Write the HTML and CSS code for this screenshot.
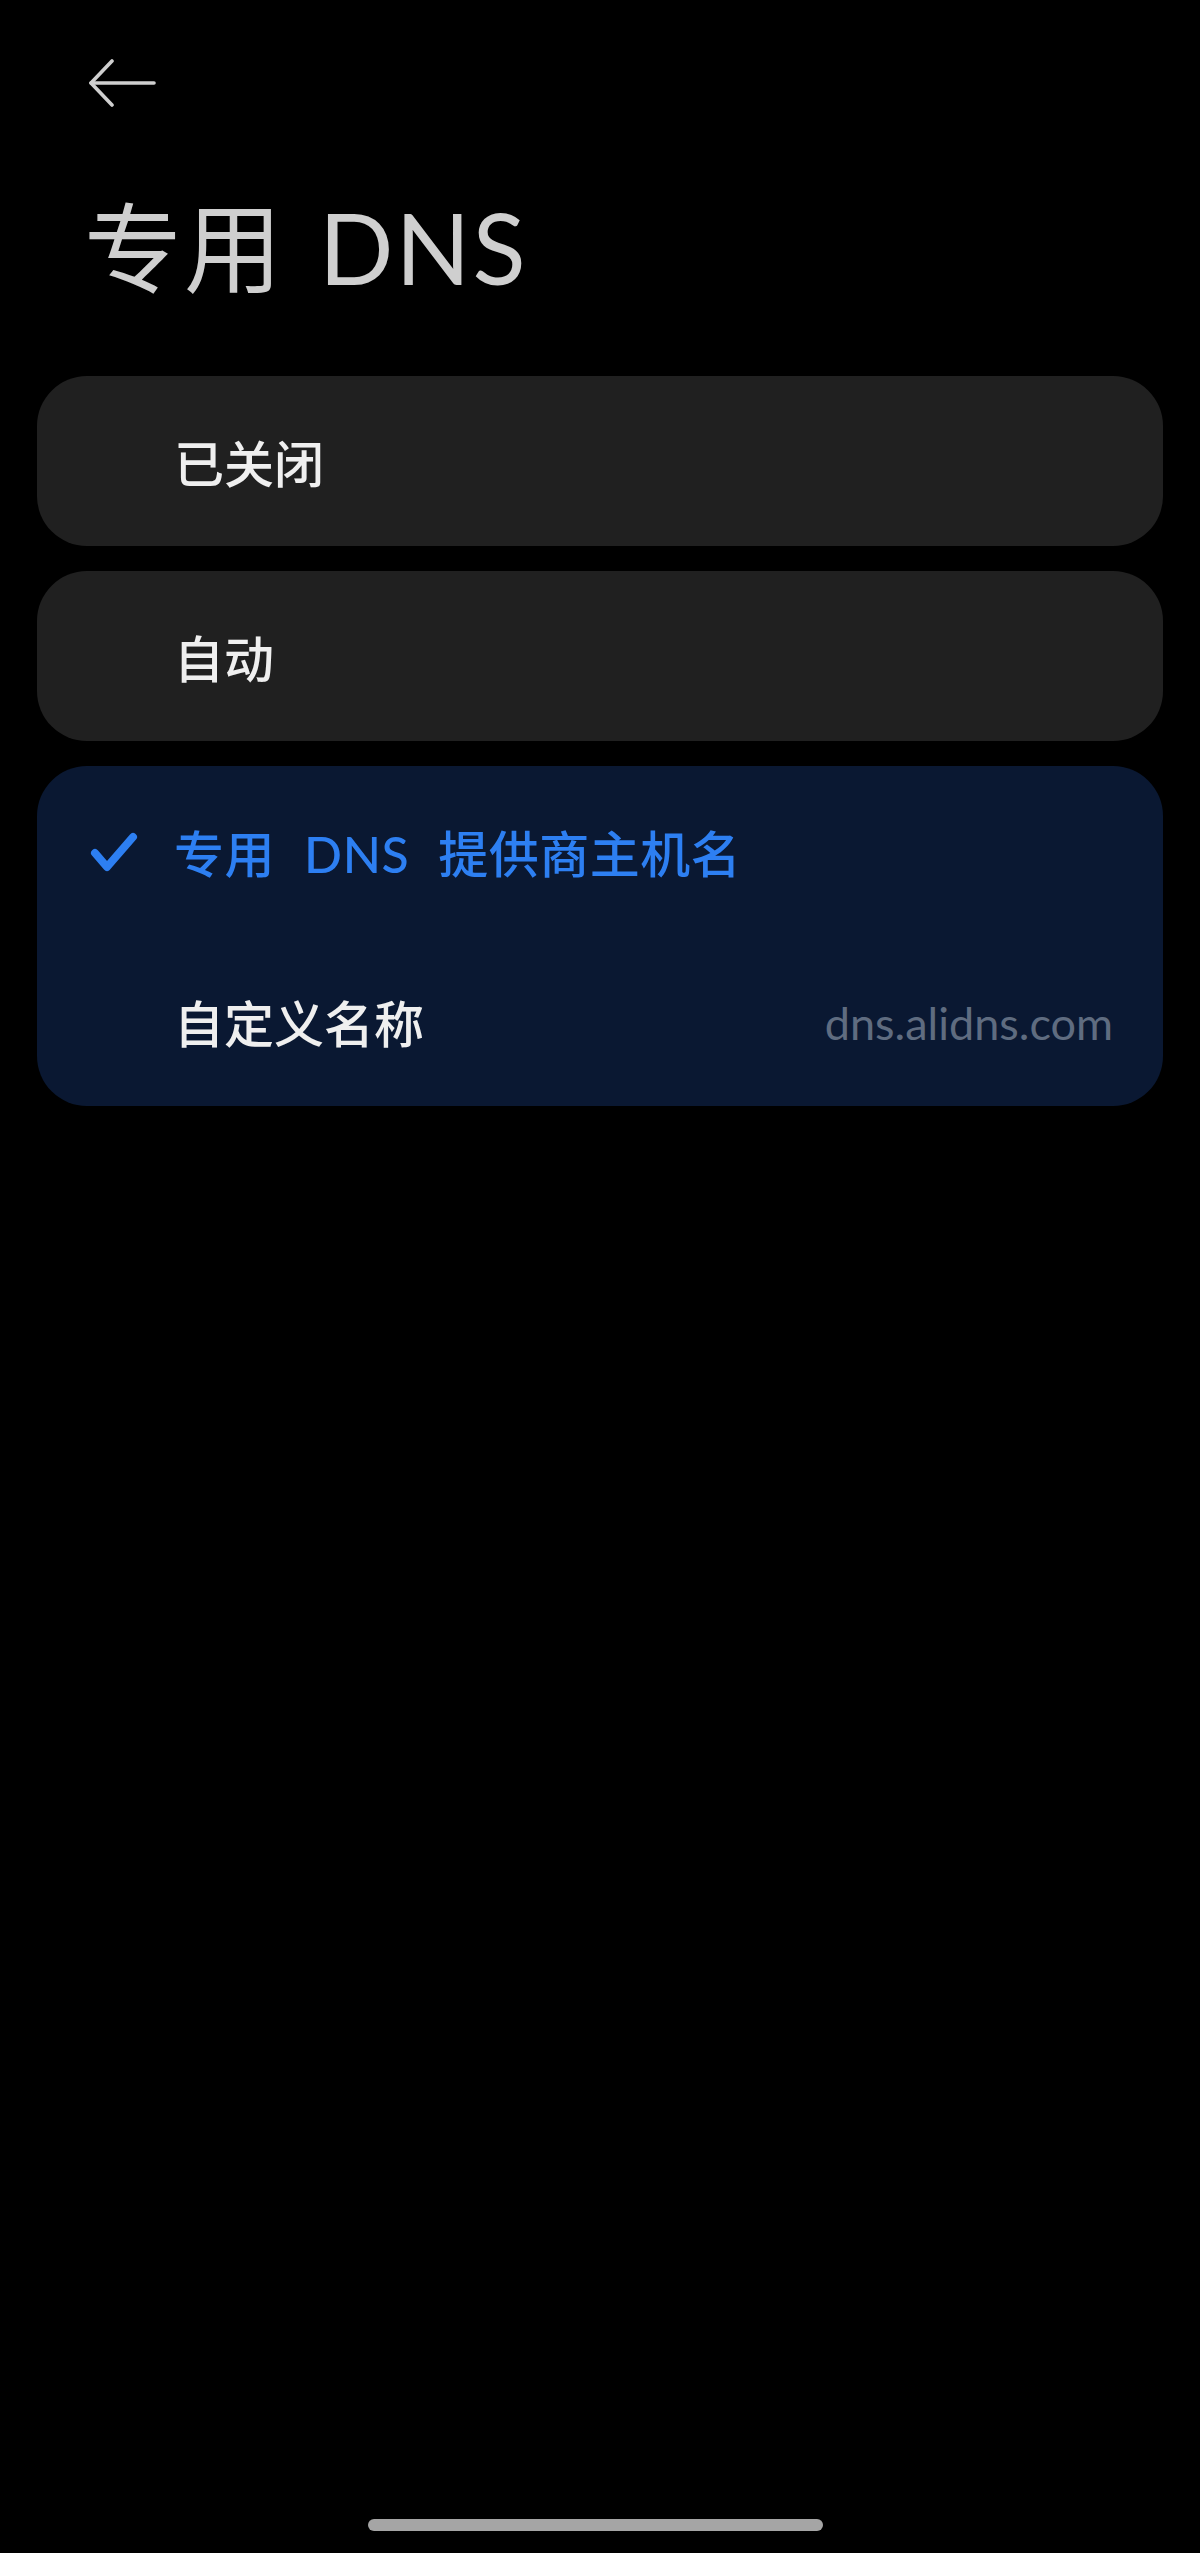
FILE: index.html
```html
<!DOCTYPE html>
<html lang="zh-CN">
<head>
<meta charset="utf-8">
<title>专用 DNS</title>
<link rel="stylesheet" href="styles.css">
</head>
<body>
<div class="page">
  <header class="topbar">
    <button class="back" aria-label="返回">
      <svg width="68" height="48" viewBox="0 0 68 48" fill="none" stroke="#cfcfcf" stroke-width="3.6" stroke-linecap="round" stroke-linejoin="round">
        <path d="M66 24 H3"/>
        <path d="M24 2 L3 24 L24 46"/>
      </svg>
    </button>
  </header>
  <h1 class="title">专用 DNS</h1>
  <main class="list">
    <div class="card">
      <div class="row"><span class="label">已关闭</span></div>
    </div>
    <div class="card">
      <div class="row"><span class="label">自动</span></div>
    </div>
    <div class="card card-active">
      <div class="row">
        <svg class="check" width="48" height="42" viewBox="0 0 48 42" fill="none" stroke="#2d7ff2" stroke-width="8" stroke-linecap="round" stroke-linejoin="round">
          <path d="M5 21 L17 35 L43 5"/>
        </svg>
        <span class="label label-active">专用 DNS 提供商主机名</span>
      </div>
      <div class="row">
        <span class="label">自定义名称</span>
        <span class="value">dns.alidns.com</span>
      </div>
    </div>
  </main>
  <footer class="home">
    <div class="home-bar"></div>
  </footer>
</div>
</body>
</html>
```
FILE: styles.css
```css
html, body {
  margin: 0;
  padding: 0;
  background: #000;
}
body {
  font-family: "Lato", "Noto Sans CJK SC", "Noto Sans", sans-serif;
  color: #f0f0f0;
}
.page {
  width: 1200px;
  min-height: 2553px;
  display: flex;
  flex-direction: column;
}
.topbar {
  padding: 59px 0 0 88px;
  height: 49px;
}
.back {
  background: none;
  border: 0;
  padding: 0;
  margin: 0;
  display: block;
  cursor: pointer;
}
.back svg { display: block; }
.title {
  margin: 90px 0 0 84px;
  font-size: 98px;
  line-height: 1;
  font-weight: 400;
  color: #cfcfcf;
  word-spacing: 8px;
  letter-spacing: 2px;
}
.list {
  margin: 80px 37px 0;
  display: flex;
  flex-direction: column;
  gap: 25px;
}
.card {
  background: #202020;
  border-radius: 50px;
}
.card-active {
  background: #0a1832;
}
.row {
  height: 170px;
  display: flex;
  align-items: center;
  padding: 5px 50px 0 137px;
  box-sizing: border-box;
  position: relative;
}
.check {
  position: absolute;
  left: 53px;
  top: 66px;
}
.label {
  font-size: 50px;
  line-height: 1;
  font-weight: 500;
  color: #efefef;
  flex: 1;
}
.label-active {
  color: #2d7ff2;
  word-spacing: 16px;
  letter-spacing: 0.5px;
}
.value {
  font-size: 45px;
  color: #5f6c80;
  line-height: 1;
}
.home {
  margin-top: auto;
  display: flex;
  justify-content: center;
  padding-bottom: 22px;
}
.home-bar {
  width: 455px;
  height: 12px;
  border-radius: 6px;
  background: #a5a5a5;
  margin-right: 10px;
}
```
